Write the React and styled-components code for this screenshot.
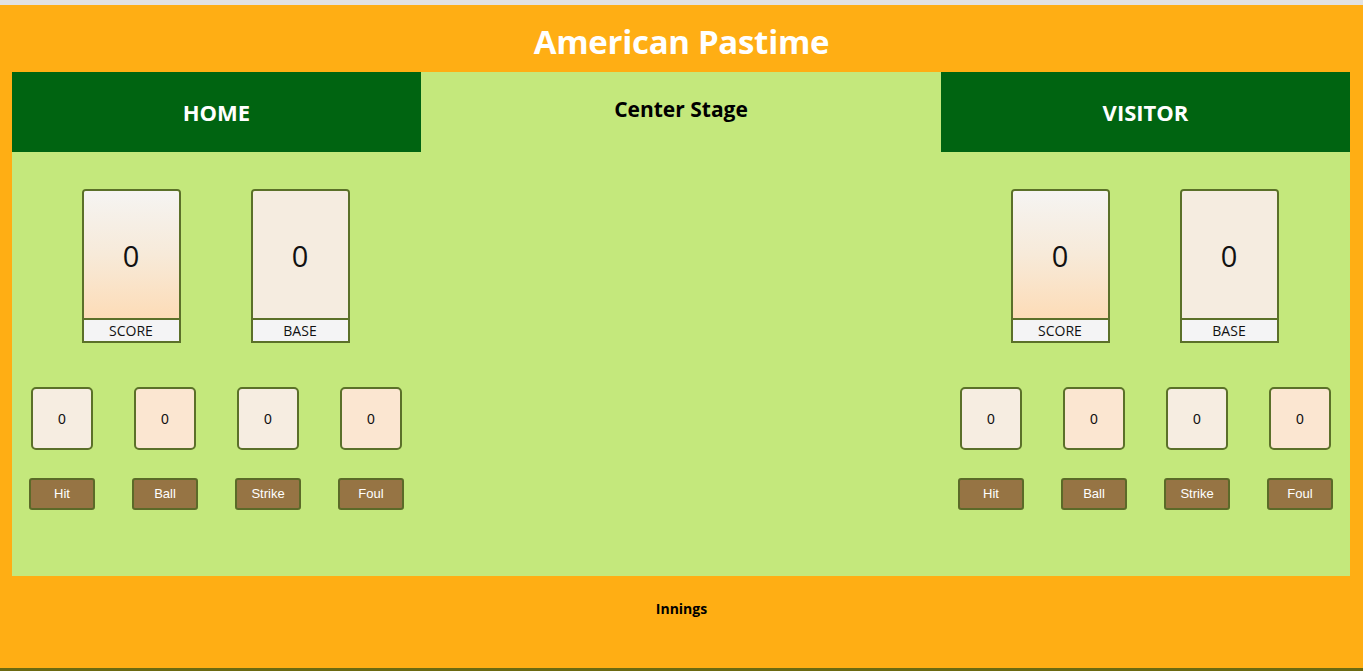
import React from "react";
import styled, { createGlobalStyle } from "styled-components";

const GlobalStyle = createGlobalStyle`
  html, body {
    margin: 0;
    padding: 0;
  }
  body {
    font-family: "Open Sans", "Noto Sans", sans-serif;
    background: #ffae14;
  }
`;

const Page = styled.div`
  box-sizing: border-box;
  height: 671px;
  background: #ffae14;
  border-top: 5px solid #e2e2e2;
  border-bottom: 3px solid #6b6a12;
  display: flex;
  flex-direction: column;
`;

const Title = styled.h1`
  margin: 0;
  height: 67px;
  display: flex;
  align-items: center;
  justify-content: center;
  padding-top: 5px;
  box-sizing: border-box;
  color: #ffffff;
  font-size: 33px;
  font-weight: 700;
  letter-spacing: -0.3px;
`;

const Board = styled.div`
  margin: 0 13px 0 12px;
  height: 504px;
  background: #c4e87c;
  display: grid;
  grid-template-columns: 409px 1fr 409px;
`;

const TeamColumn = styled.div`
  display: flex;
  flex-direction: column;
  align-items: center;
`;

const TeamHeader = styled.h2`
  margin: 0;
  width: 100%;
  height: 80px;
  background: #006411;
  color: #ffffff;
  font-size: 22px;
  font-weight: 700;
  display: flex;
  align-items: center;
  justify-content: center;
  padding-bottom: 1px;
  box-sizing: border-box;
`;

const CenterHeader = styled.h2`
  margin: 0;
  height: 80px;
  color: #000000;
  font-size: 21px;
  font-weight: 700;
  display: flex;
  align-items: center;
  justify-content: center;
  padding-bottom: 6px;
  box-sizing: border-box;
`;

const CardRow = styled.div`
  display: flex;
  gap: 70px;
  margin-top: 37px;
  margin-right: 2px;
`;

const Card = styled.div`
  box-sizing: border-box;
  width: 99px;
  height: 154px;
  border: 2px solid #5b7029;
  border-radius: 4px 4px 0 0;
  display: flex;
  flex-direction: column;
  overflow: hidden;
`;

const CardValue = styled.div`
  flex: 1;
  display: flex;
  align-items: center;
  justify-content: center;
  font-size: 29px;
  color: #111111;
  padding-top: 2px;
  background: ${(p) =>
    p.$gradient
      ? "linear-gradient(to bottom, #f5f4f2 0%, #f7ead9 50%, #fddcb7 100%)"
      : "#f5ece0"};
`;

const CardLabel = styled.div`
  height: 23px;
  border-top: 2px solid #5b7029;
  background: #f4f4f5;
  font-size: 14px;
  color: #111111;
  display: flex;
  align-items: center;
  justify-content: center;
  box-sizing: border-box;
`;

const CountGrid = styled.div`
  display: grid;
  grid-template-columns: repeat(4, 66px);
  column-gap: 37px;
  margin-top: 44px;
  justify-items: center;
`;

const CountBox = styled.div`
  box-sizing: border-box;
  width: 62px;
  height: 63px;
  border: 2px solid #5b7029;
  border-radius: 5px;
  background: ${(p) => (p.$warm ? "#fbe6d1" : "#f6ede1")};
  display: flex;
  align-items: center;
  justify-content: center;
  font-family: "Liberation Sans", Arial, sans-serif;
  font-size: 14px;
  color: #111111;
`;

const ActionButton = styled.button`
  box-sizing: border-box;
  width: 66px;
  height: 32px;
  margin-top: 28px;
  background: #967444;
  border: 2px solid #5b6a28;
  border-radius: 3px;
  color: #ffffff;
  font-family: "Liberation Sans", Arial, sans-serif;
  font-size: 13px;
  cursor: pointer;
  padding: 0 0 2px;
`;

const Footer = styled.div`
  flex: 1;
  display: flex;
  justify-content: center;
  padding-top: 23px;
  font-size: 14px;
  font-weight: 700;
  color: #000000;
`;

const counts = ["Hit", "Ball", "Strike", "Foul"];

const Team = ({ name }) => (
  <TeamColumn>
    <TeamHeader>{name}</TeamHeader>
    <CardRow>
      <Card>
        <CardValue $gradient>0</CardValue>
        <CardLabel>SCORE</CardLabel>
      </Card>
      <Card>
        <CardValue>0</CardValue>
        <CardLabel>BASE</CardLabel>
      </Card>
    </CardRow>
    <CountGrid>
      {counts.map((c, i) => (
        <CountBox key={c} $warm={i % 2 === 1}>
          0
        </CountBox>
      ))}
      {counts.map((c) => (
        <ActionButton key={c}>{c}</ActionButton>
      ))}
    </CountGrid>
  </TeamColumn>
);

const App = () => {
  return (
    <>
      <GlobalStyle />
      <Page>
        <Title>American Pastime</Title>
        <Board>
          <Team name="HOME" />
          <div>
            <CenterHeader>Center Stage</CenterHeader>
          </div>
          <Team name="VISITOR" />
        </Board>
        <Footer>Innings</Footer>
      </Page>
    </>
  );
};

export default App;
